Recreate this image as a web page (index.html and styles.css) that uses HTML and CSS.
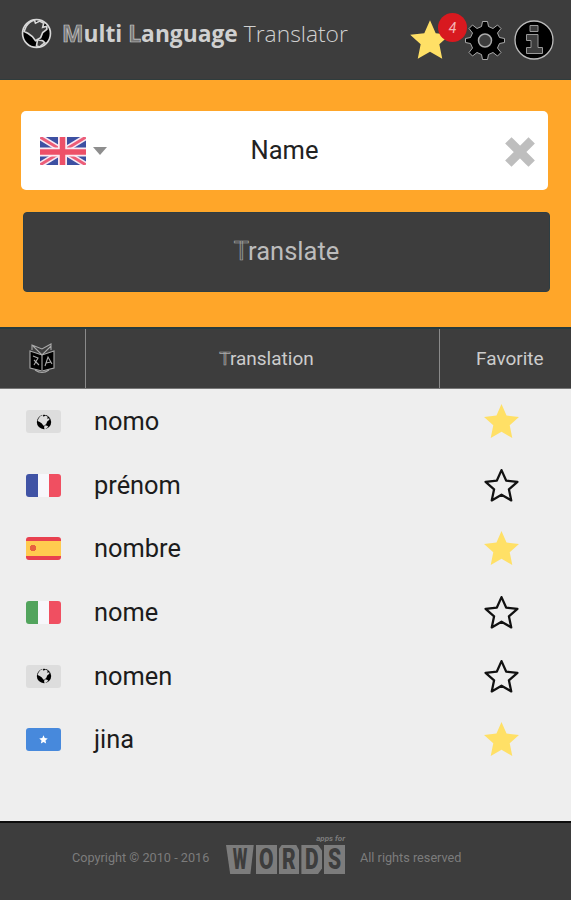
FILE: index.html
```html
<!DOCTYPE html>
<html lang="en">
<head>
    <meta charset="UTF-8">
    <meta name="viewport" content="width=device-width, initial-scale=1.0">
    <title>Multi Language Translator</title>
    <link rel="stylesheet" href="styles.css">
</head>
<body>
    <!-- Shared icons -->
    <svg class="icon-defs" width="0" height="0">
        <symbol id="star" viewBox="0 0 36 36">
            <path d="M18 1l4.900 11.200L35 13.500l-9 8.200L28.500 34 18 28 7.500 34 10 21.700l-9-8.200 12.100-1.300z"/>
        </symbol>
        <symbol id="star-outline" viewBox="0 0 36 36">
            <path d="M18 3l4.500 10.200L33.500 14.400l-8.300 7.300 2.300 10.800-9.500-5.500-9.500 5.500 2.300-10.800-8.300-7.300 11-1.200z"/>
        </symbol>
        <symbol id="globe" viewBox="0 0 30 30">
            <circle class="sea" cx="15" cy="15" r="13.500"/>
            <path class="land" d="M5 8Q8 3 13 2l1 3 4-2 4 2-1 4 4-1 0 3-4 3-2 5-5 3-3-4-4-3-4-2zM16 21l5 1 2 2-5 4-3-1z"/>
        </symbol>
    </svg>

    <header class="header">
        <svg class="logo"><use href="#globe"/></svg>
        <h1 class="title"><b><span class="hollow">M</span>ulti <span class="hollow">L</span>anguage</b> Translator</h1>
        <div class="header-icons">
            <div class="favorites">
                <svg class="header-star"><use href="#star"/></svg>
                <span class="badge">4</span>
            </div>
            <svg class="gear" viewBox="0 0 40 40">
                <path d="M17.500 1.500h5l1 5 4.500 2 4.500-3.500 3.500 3.500-3.500 4.500 2 4.500 5 1v4l-5 1-2 4.500 3.500 4.500-3.500 3.500-4.500-3.500-4.500 2-1 5h-5l-1-5-4.500-2L7.500 36 4 32.500 7.500 28l-2-4.500-5-1v-4l5-1 2-4.500L4 8.500 7.500 5 12 8.500l4.500-2z"/>
                <circle cx="20" cy="20.500" r="6.500"/>
            </svg>
            <svg class="info" viewBox="0 0 40 40">
                <circle class="disc" cx="20" cy="20" r="19"/>
                <path class="mark" d="M16 5.500h8v6h-8zM12.500 14.500H24v13h4.500v6h-16v-6H17v-7h-4.500z"/>
            </svg>
        </div>
    </header>

    <section class="search">
        <div class="input-box">
            <svg class="flag-uk" viewBox="0 0 46 28">
                <rect width="46" height="28" fill="#3d50a2"/>
                <path d="M0 0l46 28M46 0L0 28" stroke="#f6e9f3" stroke-width="6"/>
                <path d="M0 0l46 28M46 0L0 28" stroke="#ec5d78" stroke-width="2.800"/>
                <path d="M22.500 0v28M0 15h46" stroke="#fbeaf0" stroke-width="9"/>
                <path d="M22.500 0v28M0 15h46" stroke="#ed5068" stroke-width="5.500"/>
            </svg>
            <span class="caret"></span>
            <span class="word">Name</span>
            <svg class="clear" viewBox="0 0 32 32">
                <path d="M7.500 7.500l17 17M24.500 7.500l-17 17" stroke="#bebebe" stroke-width="9" stroke-linecap="square"/>
            </svg>
        </div>
        <button class="translate"><span class="hollow">T</span>ranslate</button>
    </section>

    <div class="table-head">
        <div class="col-lang">
            <svg class="book" viewBox="0 0 28 32">
                <path class="page" d="M2 9l12 4 12-4v17l-12 3-12-3z"/>
                <path d="M4 8V3l10 4 9-5v6M5 4l9 9 9-9M7 28q7 5 14 0M14 13v15M5 14l5 2-4 7M6 18l5 5M17 24l3-9 4 7M18 21l5-1"/>
            </svg>
        </div>
        <div class="col-word"><span class="hollow">T</span>ranslation</div>
        <div class="col-fav">Favorite</div>
    </div>

    <main class="list">
        <div class="row">
            <span class="flag other"><svg><use href="#globe"/></svg></span>
            <span class="text">nomo</span>
            <svg class="star on"><use href="#star"/></svg>
        </div>
        <div class="row">
            <span class="flag france"></span>
            <span class="text">prénom</span>
            <svg class="star"><use href="#star-outline"/></svg>
        </div>
        <div class="row">
            <span class="flag spain"></span>
            <span class="text">nombre</span>
            <svg class="star on"><use href="#star"/></svg>
        </div>
        <div class="row">
            <span class="flag italy"></span>
            <span class="text">nome</span>
            <svg class="star"><use href="#star-outline"/></svg>
        </div>
        <div class="row">
            <span class="flag other"><svg><use href="#globe"/></svg></span>
            <span class="text">nomen</span>
            <svg class="star"><use href="#star-outline"/></svg>
        </div>
        <div class="row">
            <span class="flag somalia"><svg><use href="#star"/></svg></span>
            <span class="text">jina</span>
            <svg class="star on"><use href="#star"/></svg>
        </div>
    </main>

    <footer class="footer">
        <span class="copyright">Copyright © 2010 - 2016</span>
        <div class="brand">
            <span class="brand-small">apps for</span>
            <div class="brand-tiles">
                <span class="tile tile-w"><b>W</b></span>
                <span class="tile"><b>O</b></span>
                <span class="tile tile-r"><b>R</b></span>
                <span class="tile tile-d"><b>D</b></span>
                <span class="tile"><b>S</b></span>
            </div>
        </div>
        <span class="rights">All rights reserved</span>
    </footer>
</body>
</html>
```
FILE: styles.css
```css
* {
    box-sizing: border-box;
}

body {
    margin: 0;
    height: 900px;
    display: flex;
    flex-direction: column;
    font-family: Roboto, "Liberation Sans", sans-serif;
    background-color: #eee;
    overflow: hidden;
}

svg {
    display: block;
    flex: none;
}

.icon-defs {
    position: absolute;
}

.hollow {
    color: #4a4a4a;
    -webkit-text-stroke: 0.7px #aaa;
}

/* Header */
.header {
    height: 80px;
    flex: none;
    display: flex;
    align-items: flex-start;
    padding: 18px 17px 0 21px;
    background-color: #3d3d3d;
    border-bottom: 1px solid #2f3c3d;
}

.logo {
    width: 31px;
    height: 31px;
    stroke: #d8d8d8;
    stroke-width: 1.6;
}

.sea {
    fill: #000;
}

.land {
    fill: var(--land, #3d3d3d);
}

.title {
    margin: 0 0 0 10px;
    font-family: "Open Sans", sans-serif;
    font-size: 22.8px;
    font-weight: 300;
    line-height: 32px;
    color: #d0d0d0;
    white-space: nowrap;
}

.title b {
    font-weight: 700;
}

.title .hollow {
    color: #777;
    -webkit-text-stroke-color: #ccc;
}

.header-icons {
    margin-left: auto;
    display: flex;
    padding-top: 2px;
}

.favorites {
    position: relative;
    width: 55px;
}

.header-star {
    width: 42px;
    height: 42px;
    margin: -1px 0 0 -1px;
    fill: #ffe066;
}

.badge {
    position: absolute;
    left: 28px;
    top: -7px;
    width: 29px;
    height: 29px;
    border-radius: 50%;
    background-color: #d8191f;
    color: #f5b5b5;
    font-size: 14px;
    font-style: italic;
    line-height: 30px;
    text-align: center;
}

.gear {
    width: 40px;
    height: 40px;
    stroke: #aaa;
    stroke-width: 1;
}

.gear circle {
    fill: #3d3d3d;
    stroke-width: 1.5;
}

.info {
    width: 40px;
    height: 40px;
    margin-left: 9px;
}

.disc {
    stroke: #bbb;
    stroke-width: 1.3;
}

.mark {
    fill: #3d3d3d;
    stroke: #999;
}

/* Search */
.search {
    height: 247px;
    flex: none;
    padding: 31px 22px 0 21px;
    background-color: #ffa629;
}

.input-box {
    width: 527px;
    height: 79px;
    display: flex;
    align-items: center;
    padding: 0 12px 0 19px;
    background-color: #fff;
    border-radius: 5px;
}

.flag-uk {
    width: 46px;
    height: 28px;
    border-radius: 1px;
}

.caret {
    margin: 0 0 0 7px;
    border: 7px solid transparent;
    border-top: 8px solid #8e8e8e;
    border-bottom: 0;
}

.word {
    flex: 1;
    margin: -2px 0 0 -42px;
    text-align: center;
    font-size: 25.5px;
    color: #222;
}

.clear {
    width: 32px;
    height: 32px;
    margin-top: 3px;
}

.translate {
    display: block;
    width: 527px;
    height: 80px;
    margin: 22px 0 0 2px;
    padding: 0 0 2px;
    border: 1px solid #2e3e43;
    border-radius: 4px;
    background-color: #3d3d3d;
    color: #bcbcbc;
    font-family: Roboto, sans-serif;
    font-size: 25.5px;
}

/* Results */
.table-head {
    height: 62px;
    flex: none;
    display: flex;
    background-color: #3d3d3d;
    border-top: 2px solid #263a3e;
    border-bottom: 1px solid #777;
    color: #ccc;
    font-size: 19px;
    line-height: 60px;
}

.col-lang {
    width: 86px;
    padding: 13px 0 0 28px;
    border-right: 1px solid #8a8a8a;
}

.book {
    width: 28px;
    height: 32px;
    fill: none;
    stroke: #aaa;
    stroke-width: 1.1;
}

.page {
    fill: #000;
}

.col-word {
    width: 354px;
    padding-left: 8px;
    text-align: center;
    border-right: 1px solid #8a8a8a;
}

.col-fav {
    flex: 1;
    padding-left: 36px;
}

.list {
    flex: 1;
    padding-top: 1px;
}

.row {
    height: 63.6px;
    display: flex;
    align-items: center;
    padding: 0 51px 0 26px;
}

.flag {
    width: 35px;
    height: 23px;
    display: flex;
    align-items: center;
    justify-content: center;
    border-radius: 3px;
}

.other {
    --land: #ddd;
    background-color: #ddd;
}

.other svg {
    width: 16px;
    height: 16px;
}

.france {
    background: linear-gradient(to right, #4053a5 34%, #f7f7fb 34% 66%, #f04f61 66%);
}

.italy {
    background: linear-gradient(to right, #52a45d 34%, #f7f7fb 34% 66%, #f04f61 66%);
}

.spain {
    background:
        radial-gradient(circle at 7px 11px, #e8603f 3px, transparent 3.5px),
        linear-gradient(#e8404f 18%, #ffcb4f 18% 82%, #e8404f 82%);
}

.somalia {
    background-color: #4789dc;
}

.somalia svg {
    width: 9px;
    height: 9px;
    fill: #fff;
}

.text {
    flex: 1;
    margin: -1px 0 0 33px;
    font-size: 25.4px;
    color: #1c1c1c;
}

.star {
    width: 37px;
    height: 37px;
    fill: none;
    stroke: #111;
    stroke-width: 2.2;
    stroke-linejoin: round;
}

.star.on {
    fill: #ffe066;
    stroke: none;
}

/* Footer */
.footer {
    height: 79px;
    flex: none;
    display: flex;
    align-items: flex-start;
    background-color: #3d3d3d;
    border-top: 2px solid #0c0c0c;
    padding-left: 72px;
    font-size: 12.7px;
    line-height: 16px;
    color: #7c7c7c;
    white-space: nowrap;
}

.copyright {
    width: 154px;
    padding-top: 27px;
}

.brand {
    width: 119px;
    padding-top: 10px;
}

.brand-small {
    display: block;
    font-size: 8px;
    font-style: italic;
    font-weight: 700;
    line-height: 12px;
    text-align: right;
}

.brand-tiles {
    display: flex;
    gap: 2px;
}

.tile {
    width: 21px;
    height: 29px;
    display: flex;
    justify-content: center;
    background-color: #7c7c7c;
    color: #3d3d3d;
    font-size: 21px;
    line-height: 29px;
}

.tile b {
    font-weight: 900;
    transform: scale(1, 1.4);
}

.tile-w {
    width: 28px;
    clip-path: polygon(0 0, 100% 0, 88% 100%, 15% 100%);
}

.tile-w b {
    transform: scale(0.8, 1.4);
}

.tile-r {
    clip-path: polygon(15% 0, 85% 0, 100% 20%, 100% 100%, 0 100%, 0 15%);
}

.tile-d {
    clip-path: polygon(0 0, 80% 0, 100% 20%, 100% 80%, 80% 100%, 0 100%);
}

.rights {
    margin-left: 15px;
    padding-top: 27px;
}
```
